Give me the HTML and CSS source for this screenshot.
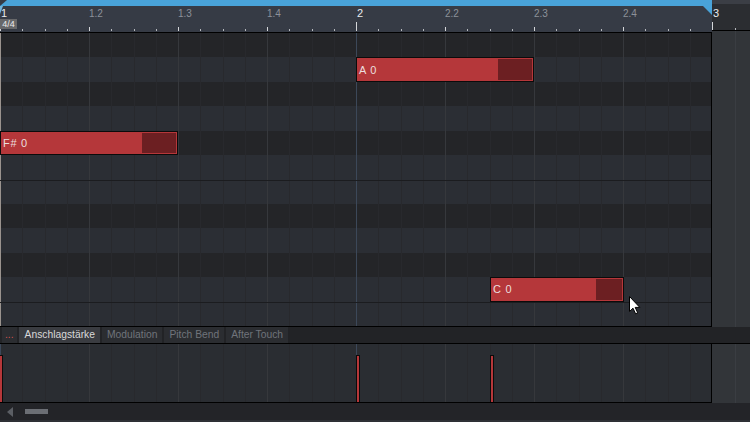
FILE: index.html
```html
<!DOCTYPE html>
<html lang="de">
<head>
<meta charset="utf-8">
<title>Piano Roll</title>
<link rel="stylesheet" href="styles.css">
</head>
<body>
<div class="app">
  <div class="upper">
    <div class="main">
      <div class="ruler">
        <div class="loopbar"></div>
        <div class="beats">
          <div class="beat bar first"><span class="lbl">1</span><span class="sig">4/4</span></div>
          <div class="beat"><span class="lbl">1.2</span></div>
          <div class="beat"><span class="lbl">1.3</span></div>
          <div class="beat"><span class="lbl">1.4</span></div>
          <div class="beat bar"><span class="lbl">2</span></div>
          <div class="beat"><span class="lbl">2.2</span></div>
          <div class="beat"><span class="lbl">2.3</span></div>
          <div class="beat"><span class="lbl">2.4</span></div>
        </div>
      </div>
      <div class="grid">
        <div class="row dark"></div>
        <div class="row light">
          <div class="note" style="margin-left:356px;width:178px"><span class="note-label">A 0</span><span class="note-tail" style="width:34px"></span></div>
        </div>
        <div class="row dark"></div>
        <div class="row light"></div>
        <div class="row dark">
          <div class="note" style="margin-left:0;width:178px"><span class="note-label">F# 0</span><span class="note-tail" style="width:34px"></span></div>
        </div>
        <div class="row light"></div>
        <div class="row light sep"></div>
        <div class="row dark"></div>
        <div class="row light"></div>
        <div class="row dark"></div>
        <div class="row light">
          <div class="note" style="margin-left:490px;width:134px"><span class="note-label">C 0</span><span class="note-tail" style="width:26px"></span></div>
        </div>
        <div class="row light sep"></div>
      </div>
    </div>
    <div class="side">
      <div class="side-ruler"><span class="side-lbl">3</span></div>
      <div class="side-body"></div>
    </div>
  </div>

  <div class="tabs">
    <span class="tab more">...</span>
    <span class="tab active">Anschlagstärke</span>
    <span class="tab">Modulation</span>
    <span class="tab">Pitch Bend</span>
    <span class="tab">After Touch</span>
  </div>

  <div class="lane-row">
    <div class="lane">
      <span class="vel" style="left:-1px"></span>
      <span class="vel" style="left:356px"></span>
      <span class="vel" style="left:490px"></span>
    </div>
    <div class="lane-side"></div>
  </div>

  <div class="scroll">
    <span class="arrow-left"></span>
    <span class="thumb"></span>
  </div>

  <svg class="cursor" width="13" height="19" viewBox="0 0 13 19">
    <path d="M0.5 0.5 L0.5 15.5 L4 12.2 L6.6 17.8 L8.7 16.8 L6.2 11.4 L10.8 11.4 Z" fill="#ffffff" stroke="#000000" stroke-width="1" stroke-linejoin="miter"/>
  </svg>
</div>
</body>
</html>
```

FILE: styles.css
```css
* { box-sizing: border-box; }

html, body {
  margin: 0;
  padding: 0;
  background: #222326;
}

body {
  font-family: "Liberation Sans", Arial, sans-serif;
}

.app {
  --blue: #49a3d9;
  --line16: #28292d;
  --lineBeat: #36383c;
  --lineBar: #3c4859;
  --tick: #d4d6d9;
  --tick16: #b6b9be;
  width: 750px;
  height: 422px;
  display: flex;
  flex-direction: column;
  overflow: hidden;
  position: relative;
}

/* ---------- upper area ---------- */
.upper {
  display: flex;
  height: 327px;
  flex: none;
}

.main {
  width: 712px;
  flex: none;
  display: flex;
  flex-direction: column;
}

.ruler {
  height: 33px;
  flex: none;
  border-bottom: 1px solid #000;
  background: #363b45;
  position: relative;
  display: flex;
  flex-direction: column;
}

.ruler::after {
  content: "";
  position: absolute;
  right: 0;
  top: 6px;
  width: 9px;
  height: 9px;
  background: var(--blue);
  clip-path: polygon(0 0, 100% 0, 100% 100%);
}

.ruler::before {
  content: "";
  position: absolute;
  left: 0;
  top: 6px;
  width: 3px;
  height: 8px;
  background: #6fb3dc;
  clip-path: polygon(0 0, 100% 0, 0 100%);
}

.loopbar {
  height: 6px;
  flex: none;
  background: var(--blue);
  clip-path: polygon(7px 0, 100% 0, 100% 100%, 0 100%);
}

.beats {
  display: flex;
  height: 26px;
}

.beat {
  width: 89px;
  flex: none;
  display: flex;
  flex-direction: column;
  align-items: flex-start;
  background-image:
    linear-gradient(var(--tick), var(--tick)),
    linear-gradient(var(--tick16), var(--tick16)),
    linear-gradient(var(--tick16), var(--tick16)),
    linear-gradient(var(--tick16), var(--tick16));
  background-size: 1px 4px, 1px 2px, 1px 2px, 1px 2px;
  background-position: 0 21px, 22px 23px, 45px 23px, 67px 23px;
  background-repeat: no-repeat;
}

.beat.bar {
  background-size: 1px 9px, 1px 2px, 1px 2px, 1px 2px;
  background-position: 0 16px, 22px 23px, 45px 23px, 67px 23px;
}

.lbl {
  font-size: 10px;
  line-height: 10px;
  color: #8c9199;
  margin-top: 3px;
  margin-left: 0;
}

.bar .lbl {
  font-size: 11px;
  line-height: 11px;
  color: #e8ebef;
  margin-top: 2px;
  margin-left: 1px;
}

.sig {
  width: 17px;
  height: 10px;
  background: #67686a;
  color: #ececec;
  font-size: 9px;
  line-height: 10px;
  text-align: center;
}

/* ---------- grid ---------- */
.grid {
  height: 294px;
  flex: none;
  border-bottom: 1px solid #000;
  border-right: 1px solid #000;
  display: flex;
  flex-direction: column;
}

.row {
  flex: 1;
  display: flex;
  background-image:
    linear-gradient(#9a938e, #9a938e),
    repeating-linear-gradient(90deg, var(--lineBar) 0 1px, transparent 1px 356px),
    repeating-linear-gradient(90deg, var(--lineBeat) 0 1px, transparent 1px 89px),
    repeating-linear-gradient(90deg,
      transparent 0 22px, var(--line16) 22px 23px,
      transparent 23px 45px, var(--line16) 45px 46px,
      transparent 46px 67px, var(--line16) 67px 68px,
      transparent 68px 89px);
  background-size: 1px 100%, auto, auto, auto;
  background-repeat: no-repeat, repeat, repeat, repeat;
}

.row.dark { background-color: #242528; }
.row.light { background-color: #2b2e34; }
.row.sep { box-shadow: inset 0 1px 0 #1b1c1f; }

.note {
  flex: none;
  display: flex;
  align-items: center;
  border: 1px solid #0b0b0b;
  padding: 1px;
  background: #b5373a;
}

.note-label {
  flex: 1;
  padding-left: 1px;
  font-size: 11px;
  line-height: 12px;
  letter-spacing: 0.7px;
  color: #ecdede;
  white-space: pre;
}

.note-tail {
  align-self: stretch;
  flex: none;
  background: #6c1f22;
}

/* ---------- right side (past the end) ---------- */
.side {
  flex: 1;
  display: flex;
  flex-direction: column;
}

.side-ruler {
  height: 31px;
  flex: none;
  border-bottom: 1px solid #000;
  background-color: #2b2d31;
  background-image:
    linear-gradient(#3b3e45, #3b3e45),
    linear-gradient(var(--tick), var(--tick)),
    linear-gradient(var(--tick16), var(--tick16));
  background-size: 100% 4px, 1px 8px, 1px 2px;
  background-position: 0 0, 0 22px, 23px 28px;
  background-repeat: no-repeat;
}

.side-lbl {
  display: block;
  font-size: 11px;
  line-height: 11px;
  color: #e8ebef;
  margin: 8px 0 0 1px;
}

.side-body {
  flex: 1;
  background-color: #323539;
  background-image: linear-gradient(#3a3d42, #3a3d42);
  background-size: 1px 100%;
  background-position: 23px 0;
  background-repeat: no-repeat;
}

/* ---------- tabs ---------- */
.tabs {
  height: 17px;
  flex: none;
  display: flex;
  gap: 2px;
  padding-left: 2px;
  border-bottom: 1px solid #000;
  background: #222326;
}

.tab {
  padding: 0 5px;
  font-size: 10.3px;
  line-height: 16px;
  color: #70747b;
  background: #2b2d31;
  white-space: nowrap;
}

.tab.more {
  padding: 0 3px;
  color: #cf5250;
}

.tab.active {
  background: #3a3c41;
  color: #d9d9d9;
  padding: 0 5px 0 6px;
}

/* ---------- velocity lane ---------- */
.lane-row {
  display: flex;
  height: 59px;
  flex: none;
}

.lane {
  position: relative;
  width: 712px;
  flex: none;
  overflow: hidden;
  border-right: 1px solid #000;
  border-bottom: 1px solid #000;
  background-color: #2a2d32;
  background-image:
    repeating-linear-gradient(90deg, var(--lineBar) 0 1px, transparent 1px 356px),
    repeating-linear-gradient(90deg, var(--lineBeat) 0 1px, transparent 1px 89px),
    repeating-linear-gradient(90deg,
      transparent 0 22px, var(--line16) 22px 23px,
      transparent 23px 45px, var(--line16) 45px 46px,
      transparent 46px 67px, var(--line16) 67px 68px,
      transparent 68px 89px);
}

.vel {
  position: absolute;
  bottom: 0;
  width: 4px;
  height: 47px;
  border: 1px solid #0b0b0b;
  border-bottom: none;
  background: #b5373a;
}

.lane-side {
  flex: 1;
  background-color: #323539;
  background-image: linear-gradient(#3a3d42, #3a3d42);
  background-size: 1px 100%;
  background-position: 23px 0;
  background-repeat: no-repeat;
}

/* ---------- scrollbar ---------- */
.scroll {
  height: 19px;
  flex: none;
  display: flex;
  align-items: center;
  padding-left: 7px;
  background: #232428;
  border-bottom: 2px solid #2e3035;
}

.arrow-left {
  width: 0;
  height: 0;
  border-top: 5px solid transparent;
  border-bottom: 5px solid transparent;
  border-right: 6px solid #5b5e64;
}

.thumb {
  margin-left: 12px;
  width: 23px;
  height: 5px;
  background: #6b6e74;
}

/* ---------- mouse pointer overlay ---------- */
.cursor {
  position: absolute;
  left: 629px;
  top: 296px;
}
```
